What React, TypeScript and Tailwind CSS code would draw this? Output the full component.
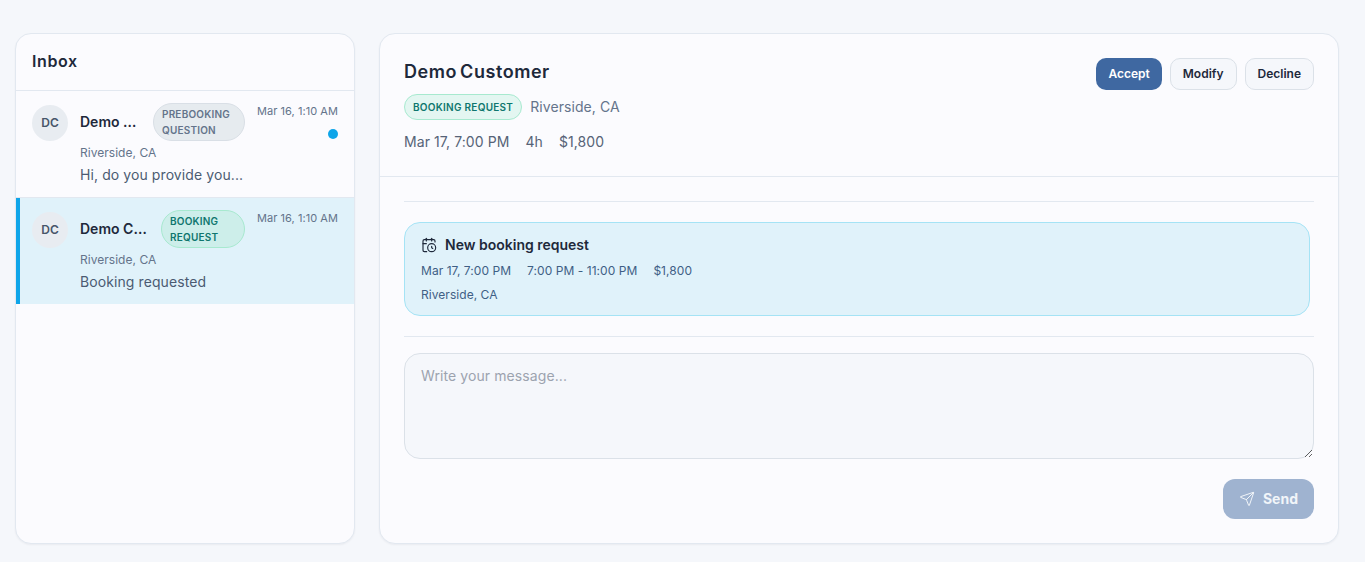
import { CalendarClock, Send } from "lucide-react";

function Row({ name, badge, badgeClass, snippet, active, dot, nameClass, badgeW }: { name: string; badge: string[]; badgeClass: string; snippet: string; active?: boolean; dot?: boolean; nameClass: string; badgeW: string }) {
  return (
    <div className={`flex gap-3 pt-3 pr-4 ${active ? "h-[106px] border-l-4 border-l-[#0ea5e9] bg-[#e0f2fa] pl-3" : "h-[107px] border-b border-b-[#e2e8f0] pl-4"}`}>
      <div className="mt-[2px] flex h-9 w-9 shrink-0 items-center justify-center rounded-full bg-[#e8ecf1] text-xs font-semibold text-[#475569]">DC</div>
      <div className="min-w-0 flex-1">
        <div className="flex items-start justify-between">
          <div className="flex items-center">
            <span className={`truncate text-sm leading-[38px] font-semibold text-[#1e293b] ${nameClass}`}>{name}</span>
            <span className={`h-[38px] rounded-[19px] border px-2 pt-[2px] text-[10px] leading-4 font-semibold tracking-[0.2px] ${badgeW} ${badgeClass}`}>
              {badge[0]}<br />{badge[1]}
            </span>
          </div>
          <div className="flex flex-col items-end">
            <span className="text-[11px] leading-[16px] tracking-[0.05px] text-[#64748b]">Mar 16, 1:10 AM</span>
            {dot && <span className="mt-[10px] h-[10px] w-[10px] rounded-full bg-[#0ea5e9]" />}
          </div>
        </div>
        <div className="mt-[4px] text-[12px] leading-[16px] tracking-[0.03px] text-[#64748b]">Riverside, CA</div>
        <div className="mt-[4px] text-sm leading-[20px] tracking-[0.09px] text-[#4b5b72]">{snippet}</div>
      </div>
    </div>
  );
}

export default function App() {
  return (
    <div className="flex h-[562px] w-[1365px] gap-6 overflow-hidden bg-[#f5f7fb] pt-[33px] pr-[26px] pb-[18px] pl-[15px] font-['Inter',sans-serif]">
      <div className="w-[340px] shrink-0 overflow-hidden rounded-2xl border border-[#e2e8f0] bg-[#fbfbfe] shadow-[0_1px_2px_rgba(15,23,42,0.05)]">
        <div className="flex h-[57px] items-center border-b border-[#e2e8f0] pb-[2px] pl-4 text-base font-semibold tracking-[0.6px] text-[#1e293b]">Inbox</div>
        <Row name="Demo Customer" nameClass="w-[59px] mr-[14px]" badgeW="w-[92px]" badge={["PREBOOKING", "QUESTION"]} badgeClass="border-[#d9dfe6] bg-[#e6ebef] text-[#64748b]" snippet="Hi, do you provide you..." dot />
        <Row name="Demo Customer" nameClass="w-[69px] mr-[12px]" badgeW="w-[84px]" badge={["BOOKING", "REQUEST"]} badgeClass="border-[#a7e9cf] bg-[#cdeeea] text-[#0f766e]" snippet="Booking requested" active />
      </div>
      <div className="flex min-w-0 flex-1 flex-col overflow-hidden rounded-2xl border border-[#e2e8f0] bg-[#fbfbfe] shadow-[0_1px_2px_rgba(15,23,42,0.05)]">
        <div className="flex h-[143px] shrink-0 justify-between border-b border-[#e2e8f0] pt-6 pr-6 pl-6">
          <div>
            <div className="text-lg leading-[28px] font-semibold tracking-[0.55px] text-[#1e293b] [word-spacing:-2px]">Demo Customer</div>
            <div className="mt-[8px] flex items-center gap-2">
              <span className="rounded-full border border-[#a7e9cf] bg-[#e3f6f1] px-2 py-[5px] text-[10px] leading-[14px] font-semibold tracking-[0.27px] text-[#0f766e]">BOOKING REQUEST</span>
              <span className="text-sm tracking-[0.07px] text-[#64748b]">Riverside, CA</span>
            </div>
            <div className="mt-[12px] flex gap-4 text-sm leading-[20px] tracking-[0.08px] text-[#566377]">
              <span>Mar 17, 7:00 PM</span><span>4h</span><span>$1,800</span>
            </div>
          </div>
          <div className="flex gap-2">
            <button className="h-8 rounded-[10px] bg-[#3f68a1] px-3 text-xs font-semibold text-white">Accept</button>
            <button className="h-8 rounded-[10px] border border-[#dbe1e8] bg-[#f5f7fb] px-3 text-xs font-semibold text-[#1e293b]">Modify</button>
            <button className="h-8 rounded-[10px] border border-[#dbe1e8] bg-[#f5f7fb] px-3 text-xs font-semibold text-[#1e293b]">Decline</button>
          </div>
        </div>
        <div className="flex-1 px-6 pt-6">
          <div className="border-t border-[#e2e8f0] pt-5 pb-5">
            <div className="mr-1 h-[94px] rounded-2xl border border-[#a5e3f5] bg-[#e0f2fa] px-4 pt-[12px]">
              <div className="flex items-center gap-2 text-sm leading-[20px] font-semibold text-[#1e293b]">
                <CalendarClock size={16} strokeWidth={1.75} />New booking request
              </div>
              <div className="mt-[7px] flex gap-4 text-xs leading-[18px] tracking-[0.05px] text-[#3f5f85]">
                <span>Mar 17, 7:00 PM</span><span>7:00 PM - 11:00 PM</span><span>$1,800</span>
              </div>
              <div className="mt-[6px] text-xs leading-[18px] tracking-[0.05px] text-[#3f5f85]">Riverside, CA</div>
            </div>
          </div>
          <div className="border-t border-[#e2e8f0] pt-4">
            <textarea placeholder="Write your message..." className="block h-[106px] w-full rounded-2xl border border-[#dbe1e8] bg-[#f5f7fb] px-4 py-3 text-sm tracking-[0.09px] placeholder:text-[#9ca3af]" />
          </div>
          <div className="mt-5 flex justify-end">
            <button className="flex h-10 items-center gap-2 rounded-xl bg-[#9fb3d0] px-4 text-sm font-bold text-[#f1f5f9]">
              <Send size={16} strokeWidth={1.5} />Send
            </button>
          </div>
        </div>
      </div>
    </div>
  );
}
